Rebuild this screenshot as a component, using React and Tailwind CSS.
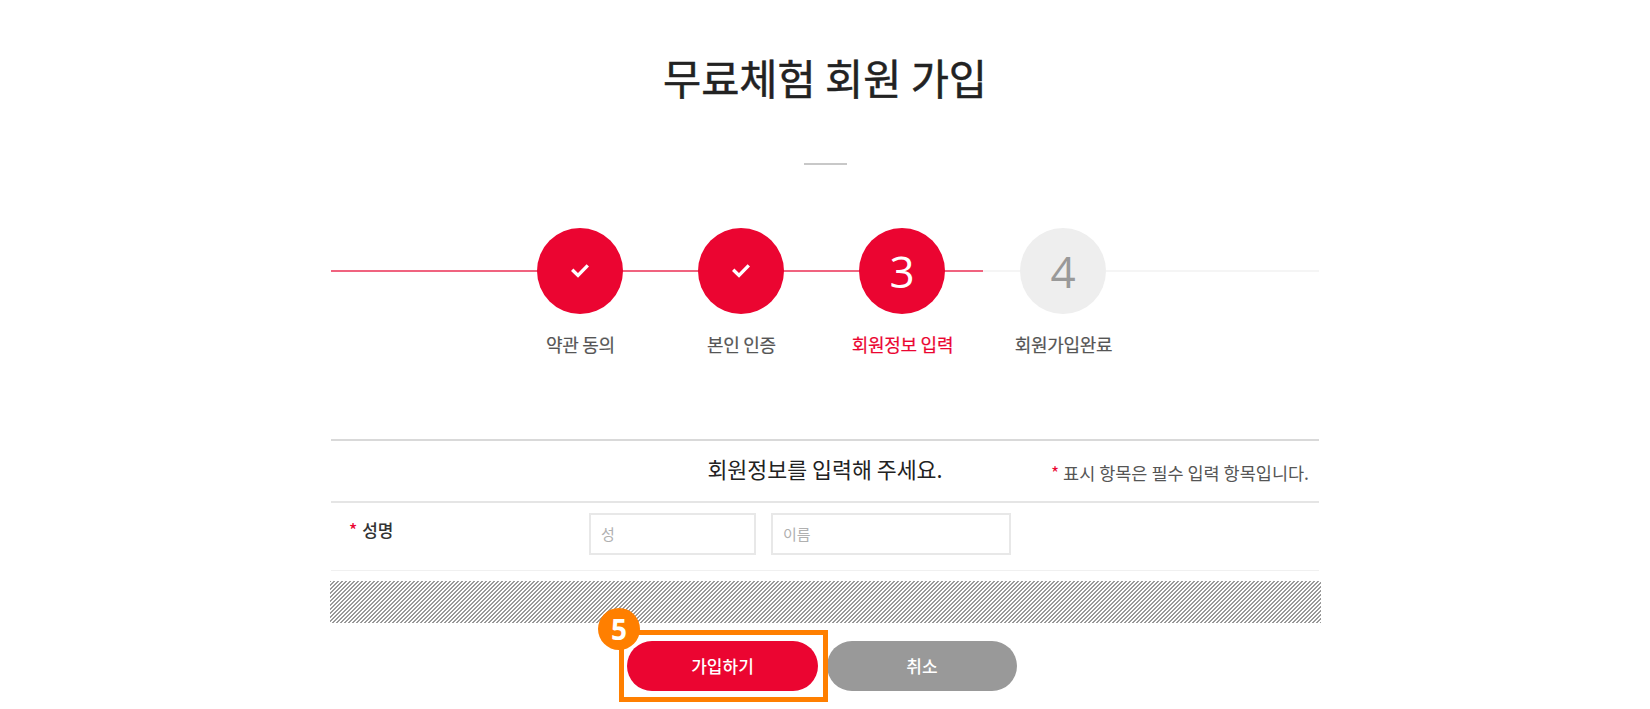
const steps = [
  { label: '약관 동의', done: true },
  { label: '본인 인증', done: true },
  { label: '회원정보 입력', num: '3', current: true },
  { label: '회원가입완료', num: '4' },
];

const font = "font-['Noto_Sans_CJK_KR','Noto_Sans',sans-serif]";

const CheckMark = () => (
  <svg width="18" height="14" viewBox="0 0 18 14" fill="none">
    <polyline points="1.2,5.8 7,11.4 16.8,1.4" stroke="#ffffff" strokeWidth="3.4" />
  </svg>
);

const Step = ({ step }) => {
  const active = step.done || step.current;
  return (
    <div className="w-[161px] flex flex-col items-center">
      <div
        className={`w-[86px] h-[86px] rounded-full flex items-center justify-center ${
          active ? 'bg-[#eb0531] text-white' : 'bg-[#eeeeee] text-[#999999]'
        }`}
      >
        {step.done ? (
          <CheckMark />
        ) : (
          <span className="font-['Open_Sans',sans-serif] text-[44px] leading-none pl-[1px]">{step.num}</span>
        )}
      </div>
      <p
        className={`mt-[18px] pl-[2px] text-[18px] leading-[24px] tracking-[-0.3px] whitespace-nowrap [-webkit-text-stroke:0.2px] ${
          step.current ? 'text-[#eb0531]' : 'text-[#555555]'
        }`}
      >
        {step.label}
      </p>
    </div>
  );
};

export default function App() {
  return (
    <div className={`${font} bg-white min-h-[709px] overflow-hidden`}>
      <div className="w-[988px] ml-[331px]">
        {/* Title */}
        <h1 className="mt-[45px] text-center text-[41.5px] leading-[64px] font-normal text-[#222222] [-webkit-text-stroke:0.5px]">
          무료체험 회원 가입
        </h1>
        <div className="mt-[54px] mx-auto w-[43px] h-[2px] bg-[#c8c8c8]" />

        {/* Steps */}
        <div className="relative mt-[63px] h-[165px]">
          <div className="absolute left-0 right-0 top-[42px] h-[2px] bg-[#f5f5f5]" />
          <div className="absolute left-0 w-[652px] top-[42px] h-[2px] bg-[#f0637f]" />
          <div className="relative flex pl-[168px]">
            {steps.map((step) => (
              <Step key={step.label} step={step} />
            ))}
          </div>
        </div>

        {/* Form head */}
        <div className="mt-[46px] border-t-2 border-[#d9d9d9] h-[64px] relative flex items-center justify-center border-b-2 border-b-[#e5e5e5]">
          <p className="text-[21.7px] text-[#222222] pb-[4px]">회원정보를 입력해 주세요.</p>
          <p className="absolute right-[10px] text-[17.5px] text-[#555555] pt-[4px]">
            <span className="text-[#eb0531]">*</span> 표시 항목은 필수 입력 항목입니다.
          </p>
        </div>

        {/* Name row */}
        <div className="h-[68px] flex items-start border-b border-[#f0f0f0]">
          <p className="w-[258px] pl-[18px] pt-[14px] text-[17px] font-medium text-[#333333]">
            <span className="text-[#eb0531] mr-[5px]">*</span>성명
          </p>
          <div className="flex gap-[15px] pt-[10px]">
            <input
              placeholder="성"
              className="w-[167px] h-[42px] border-2 border-[#e8e8e8] pl-[10px] pb-[2px] text-[15px] placeholder:text-[#b0b0b0]"
            />
            <input
              placeholder="이름"
              className="w-[240px] h-[42px] border-2 border-[#e8e8e8] pl-[10px] pb-[2px] text-[15px] placeholder:text-[#b0b0b0]"
            />
          </div>
        </div>

        {/* Hatched area */}
        <div className="mt-[10px] -ml-px w-[991px] h-[42px] bg-[repeating-linear-gradient(135deg,#999999_0px,#999999_1.1px,#ffffff_1.1px,#ffffff_2.828px)]" />

        {/* Buttons */}
        <div className="relative mt-[18px] flex gap-[9px] pl-[296px]">
          <div className="absolute left-[288px] top-[-11px] w-[209px] h-[72px] border-[5px] border-[#ff7f00]" />
          <div className="absolute left-[267px] top-[-33px] w-[42px] h-[42px] rounded-full bg-[#ff7f00] text-white flex items-center justify-center text-[28px] font-bold font-['Open_Sans',sans-serif]">
            5
          </div>
          <button className="relative w-[191px] h-[50px] rounded-full bg-[#eb0531] text-white text-[17px] font-medium">
            가입하기
          </button>
          <button className="w-[190px] h-[50px] rounded-full bg-[#999999] text-white text-[17px] font-medium">
            취소
          </button>
        </div>
      </div>
    </div>
  );
}
